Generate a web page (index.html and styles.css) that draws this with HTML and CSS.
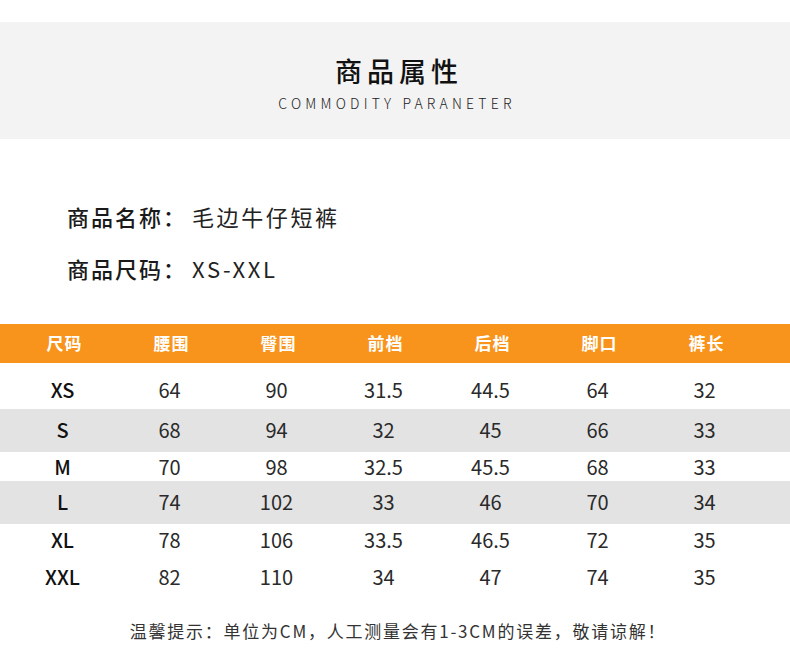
FILE: index.html
```html
<!DOCTYPE html>
<html lang="zh-CN">
<head>
<meta charset="utf-8">
<title>商品属性</title>
<link rel="stylesheet" href="styles.css">
</head>
<body>
<div class="page">
  <header class="banner">
    <h1 class="banner-title">商品属性</h1>
    <p class="banner-sub">COMMODITY PARANETER</p>
  </header>

  <section class="info">
    <p class="info-line"><span class="info-label">商品名称：</span><span class="info-value">毛边牛仔短裤</span></p>
    <p class="info-line"><span class="info-label">商品尺码：</span><span class="info-value">XS-XXL</span></p>
  </section>

  <section class="sizes">
    <div class="row head">
      <div class="cell">尺码</div><div class="cell">腰围</div><div class="cell">臀围</div><div class="cell">前档</div><div class="cell">后档</div><div class="cell">脚口</div><div class="cell">裤长</div>
    </div>
    <div class="row r1">
      <div class="cell size">XS</div><div class="cell">64</div><div class="cell">90</div><div class="cell">31.5</div><div class="cell">44.5</div><div class="cell">64</div><div class="cell">32</div>
    </div>
    <div class="row r2 gray">
      <div class="cell size">S</div><div class="cell">68</div><div class="cell">94</div><div class="cell">32</div><div class="cell">45</div><div class="cell">66</div><div class="cell">33</div>
    </div>
    <div class="row r3">
      <div class="cell size">M</div><div class="cell">70</div><div class="cell">98</div><div class="cell">32.5</div><div class="cell">45.5</div><div class="cell">68</div><div class="cell">33</div>
    </div>
    <div class="row r4 gray">
      <div class="cell size">L</div><div class="cell">74</div><div class="cell">102</div><div class="cell">33</div><div class="cell">46</div><div class="cell">70</div><div class="cell">34</div>
    </div>
    <div class="row r5">
      <div class="cell size">XL</div><div class="cell">78</div><div class="cell">106</div><div class="cell">33.5</div><div class="cell">46.5</div><div class="cell">72</div><div class="cell">35</div>
    </div>
    <div class="row r6">
      <div class="cell size">XXL</div><div class="cell">82</div><div class="cell">110</div><div class="cell">34</div><div class="cell">47</div><div class="cell">74</div><div class="cell">35</div>
    </div>
  </section>

  <p class="note">温馨提示：单位为CM，人工测量会有1-3CM的误差，敬请谅解！</p>
</div>
</body>
</html>
```
FILE: styles.css
```css
* { box-sizing: border-box; }
html, body { margin: 0; padding: 0; background: #fff; }
body {
  font-family: "Noto Sans CJK SC", "Noto Sans", sans-serif;
  color: #222;
}
.page { width: 790px; padding-top: 22px; }

.banner {
  height: 117px;
  background: #f3f3f3;
  display: flex;
  flex-direction: column;
  align-items: center;
  padding-top: 33px;
}
.banner-title {
  margin: 0;
  font-size: 27px;
  line-height: 32px;
  font-weight: 500;
  letter-spacing: 5px;
  padding-left: 8px;
  color: #111;
}
.banner-sub {
  margin: 7px 0 0;
  font-size: 14px;
  line-height: 18px;
  font-weight: 300;
  letter-spacing: 4.2px;
  padding-left: 4px;
  color: #222;
}

.info { padding: 62px 0 0 67px; height: 185px; }
.info-line {
  margin: 0 0 21px;
  font-size: 22px;
  line-height: 31px;
  letter-spacing: 2px;
  color: #1a1a1a;
}
.info-label { font-weight: 500; }
.info-value { font-weight: 400; color: #222; margin-left: 5px; letter-spacing: 2.6px; }

.row {
  display: grid;
  grid-template-columns: repeat(7, 107px);
  padding-left: 9px;
  align-items: center;
}
.cell { text-align: center; }
.head {
  height: 39px;
  padding-bottom: 3px;
  background: #f8941b;
  color: #fff;
  font-weight: 700;
  font-size: 17px;
  letter-spacing: 1px;
}
.head .cell { padding-left: 4px; }
.row:not(.head) {
  font-size: 20px;
  font-weight: 400;
  color: #2a2a2a;
  padding-bottom: 3px;
}
.gray { background: #e3e3e3; }
.size { font-weight: 500; color: #111; font-size: 20px; }

.r1 { height: 46px; padding-top: 9px; }
.r2 { height: 43px; }
.r3 { height: 29px; }
.r4 { height: 43px; }
.r5 { height: 34px; }
.r6 { height: 40px; }

.note {
  margin: 22px 0 0;
  text-align: center;
  font-size: 17px;
  line-height: 22px;
  letter-spacing: 1.75px;
  color: #333;
  padding-left: 6px;
}
```
